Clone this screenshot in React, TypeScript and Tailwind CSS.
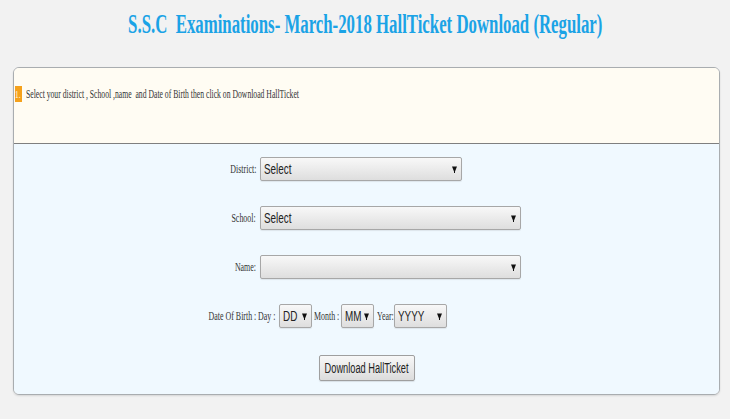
import React from "react";

// the reference text is horizontally condensed, so every run of text is squeezed with scale-x
function Narrow({ children, origin = "origin-left", scale = "scale-x-[0.66]" }: { children: React.ReactNode; origin?: string; scale?: string }) {
  return <span className={`inline-block whitespace-nowrap ${scale} ${origin}`}>{children}</span>;
}

function Arrow() {
  return (
    <svg width="5" height="9" viewBox="0 0 5 9" className="shrink-0">
      <path d="M0 1.5 H5 L3 6.5 V8 H2 V6.5 Z" fill="#111" />
    </svg>
  );
}

function FakeSelect({ width, text }: { width: string; text?: string }) {
  return (
    <div
      className={`${width} h-[24px] shrink-0 flex items-center pl-[3px] pr-[4px] rounded-[2px] border border-[#a7a7a7] bg-gradient-to-b from-[#f8f8f8] to-[#dedede] shadow-[0_1px_1px_rgba(0,0,0,0.08)] text-[15px] text-[#222] overflow-hidden`}
      style={{ fontFamily: '"Liberation Sans", Arial, sans-serif' }}
    >
      <span className="flex-1 min-w-0">{text ? <Narrow>{text}</Narrow> : null}</span>
      <Arrow />
    </div>
  );
}

function Row({ label, children }: { label: string; children: React.ReactNode }) {
  return (
    <div className="flex items-center">
      <div className="w-[246px] shrink-0 text-right pr-[4px] text-[12px] text-[#333]">
        <Narrow origin="origin-right">{label}</Narrow>
      </div>
      {children}
    </div>
  );
}

function Inline({ w, ml, children }: { w: string; ml: string; children: React.ReactNode }) {
  return (
    <span className={`${w} ${ml} shrink-0 text-[12px] text-[#333]`}>
      <Narrow>{children}</Narrow>
    </span>
  );
}

export default function App() {
  return (
    <div className="min-h-screen w-full bg-[#f2f2f2] pb-[24px] overflow-hidden" style={{ fontFamily: '"Liberation Serif", "Times New Roman", serif' }}>
      <h1 className="pt-[8px] flex justify-center text-[27px] leading-[32px] font-bold text-[#1ba3e6]">
        <Narrow origin="origin-center" scale="scale-x-[0.622]">S.S.C&nbsp; Examinations- March-2018 HallTicket Download (Regular)</Narrow>
      </h1>

      <div className="mt-[27px] ml-[13px] w-[707px] rounded-[6px] border border-[#a9adb0] overflow-hidden shadow-[0_1px_2px_rgba(0,0,0,0.12)]">
        <div className="h-[76px] bg-[#fffcf3] border-b border-[#7f7f7f] pt-[18px] pl-[1px] flex items-start gap-[4px]">
          <span className="w-[7px] h-[16px] shrink-0 bg-[#f5a11c] text-[#fff7e6] text-[11px] leading-[16px]">
            <Narrow>1.</Narrow>
          </span>
          <span className="text-[12px] leading-[16px] text-[#333]">
            <Narrow scale="scale-x-[0.64]">Select your district , School ,name&nbsp; and Date of Birth then click on Download HallTicket</Narrow>
          </span>
        </div>

        <div className="h-[250px] bg-[#f0f9ff] pt-[13px] flex flex-col gap-[25px]">
          <Row label="District:">
            <FakeSelect width="w-[202px]" text="Select" />
          </Row>
          <Row label="School:">
            <FakeSelect width="w-[261px]" text="Select" />
          </Row>
          <Row label="Name:">
            <FakeSelect width="w-[261px]" />
          </Row>
          <Row label="Date Of Birth :">
            <Inline w="w-[21px]" ml="-ml-[2px]">Day :</Inline>
            <FakeSelect width="w-[33px]" text="DD" />
            <Inline w="w-[27px]" ml="ml-[2px]">Month :</Inline>
            <FakeSelect width="w-[33px]" text="MM" />
            <Inline w="w-[17px]" ml="ml-[3px]">Year:</Inline>
            <FakeSelect width="w-[53px]" text="YYYY" />
          </Row>
          <div className="flex justify-center pt-[2px]">
            <button
              className="w-[96px] h-[26px] flex items-center justify-center rounded-[2px] border border-[#9f9f9f] bg-gradient-to-b from-[#f8f8f8] to-[#dcdcdc] text-[14px] text-[#222] shadow-[0_1px_1px_rgba(0,0,0,0.1)]"
              style={{ fontFamily: '"Liberation Sans", Arial, sans-serif' }}
            >
              <Narrow origin="origin-center">Download HallTicket</Narrow>
            </button>
          </div>
        </div>
      </div>
    </div>
  );
}
